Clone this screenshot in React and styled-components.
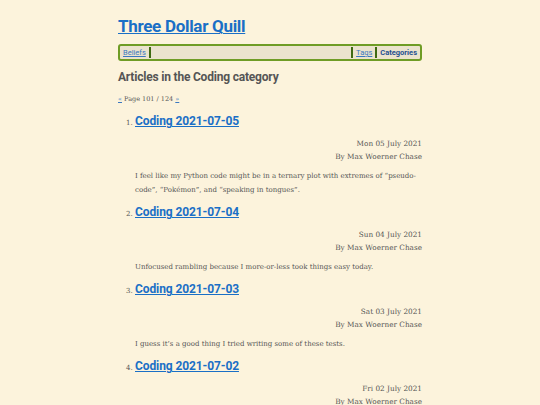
import React from "react";
import styled, { createGlobalStyle } from "styled-components";

const Global = createGlobalStyle`
  html, body { margin: 0; padding: 0; background: #fcf3dc; }
  body { font-family: "DejaVu Serif", serif; color: #555; }
`;

const Page = styled.div`
  width: 304px;
  margin: 0 auto;
  padding-top: 14px;
`;

const SiteTitle = styled.h1`
  margin: 0;
  font-family: Roboto, sans-serif;
  font-size: 17px;
  line-height: 24px;
  font-weight: 700;
  letter-spacing: -0.3px;
  a { color: #1a6fc6; text-decoration: underline; text-decoration-thickness: 1px; }
`;

const Nav = styled.nav`
  margin-top: 6px;
  display: flex;
  align-items: stretch;
  height: 11px;
  border: 2px solid #6f9c25;
  border-radius: 3px;
  background: #ebe3cd;
  padding: 1px 2px;
  font-family: Roboto, sans-serif;
  font-size: 7.5px;
  line-height: 11px;
`;

const NavLink = styled.a`
  color: ${(p) => (p.$active ? "#1f4f8f" : "#3b78c0")};
  font-weight: ${(p) => (p.$active ? 700 : 400)};
  text-decoration: ${(p) => (p.$active ? "none" : "underline")};
  padding: 0 1px;
`;

const Sep = styled.span`
  width: 2px;
  background: #3f6a12;
  margin: 0 2px;
`;

const Spacer = styled.span`
  flex: 1;
`;

const Heading = styled.h2`
  margin: 7px 0 0;
  font-family: Roboto, sans-serif;
  font-size: 12px;
  line-height: 18px;
  font-weight: 700;
  letter-spacing: -0.2px;
  color: #555;
`;

const Pager = styled.div`
  margin-top: 8px;
  font-size: 6.5px;
  line-height: 10px;
  color: #555;
  a { color: #3b78c0; }
`;

const List = styled.ol`
  margin: 8px 0 0;
  padding-left: 17px;
  font-size: 6.5px;
`;

const Item = styled.li`
  margin-bottom: 6px;
  &::marker { color: #555; font-size: 7px; }
`;

const ItemTitle = styled.h3`
  display: inline;
  margin: 0;
  font-family: Roboto, sans-serif;
  font-size: 12px;
  line-height: 18px;
  font-weight: 700;
  letter-spacing: -0.1px;
  a { color: #1a6fc6; text-decoration: underline; text-decoration-thickness: 1px; }
`;

const Meta = styled.div`
  margin-top: 7px;
  text-align: right;
  font-size: 7.3px;
  line-height: 13px;
  color: #555;
`;

const Summary = styled.p`
  margin: 6px 0 0;
  font-size: 7px;
  line-height: 14px;
  color: #555;
`;

const articles = [
  {
    title: "Coding 2021-07-05",
    date: "Mon 05 July 2021",
    summary:
      "I feel like my Python code might be in a ternary plot with extremes of \u201cpseudo-code\u201d, \u201cPok\u00e9mon\u201d, and \u201cspeaking in tongues\u201d.",
  },
  {
    title: "Coding 2021-07-04",
    date: "Sun 04 July 2021",
    summary: "Unfocused rambling because I more-or-less took things easy today.",
  },
  {
    title: "Coding 2021-07-03",
    date: "Sat 03 July 2021",
    summary: "I guess it\u2019s a good thing I tried writing some of these tests.",
  },
  {
    title: "Coding 2021-07-02",
    date: "Fri 02 July 2021",
    summary: "",
  },
];

export default function App() {
  return (
    <>
      <Global />
      <Page>
        <SiteTitle>
          <a href="#">Three Dollar Quill</a>
        </SiteTitle>
        <Nav>
          <NavLink href="#">Beliefs</NavLink>
          <Sep />
          <Spacer />
          <Sep />
          <NavLink href="#">Tags</NavLink>
          <Sep />
          <NavLink $active href="#">Categories</NavLink>
        </Nav>
        <Heading>Articles in the Coding category</Heading>
        <Pager>
          <a href="#">«</a> Page 101 / 124 <a href="#">»</a>
        </Pager>
        <List>
          {articles.map((a) => (
            <Item key={a.title}>
              <ItemTitle>
                <a href="#">{a.title}</a>
              </ItemTitle>
              <Meta>
                {a.date}
                <br />
                By Max Woerner Chase
              </Meta>
              {a.summary && <Summary>{a.summary}</Summary>}
            </Item>
          ))}
        </List>
      </Page>
    </>
  );
}
